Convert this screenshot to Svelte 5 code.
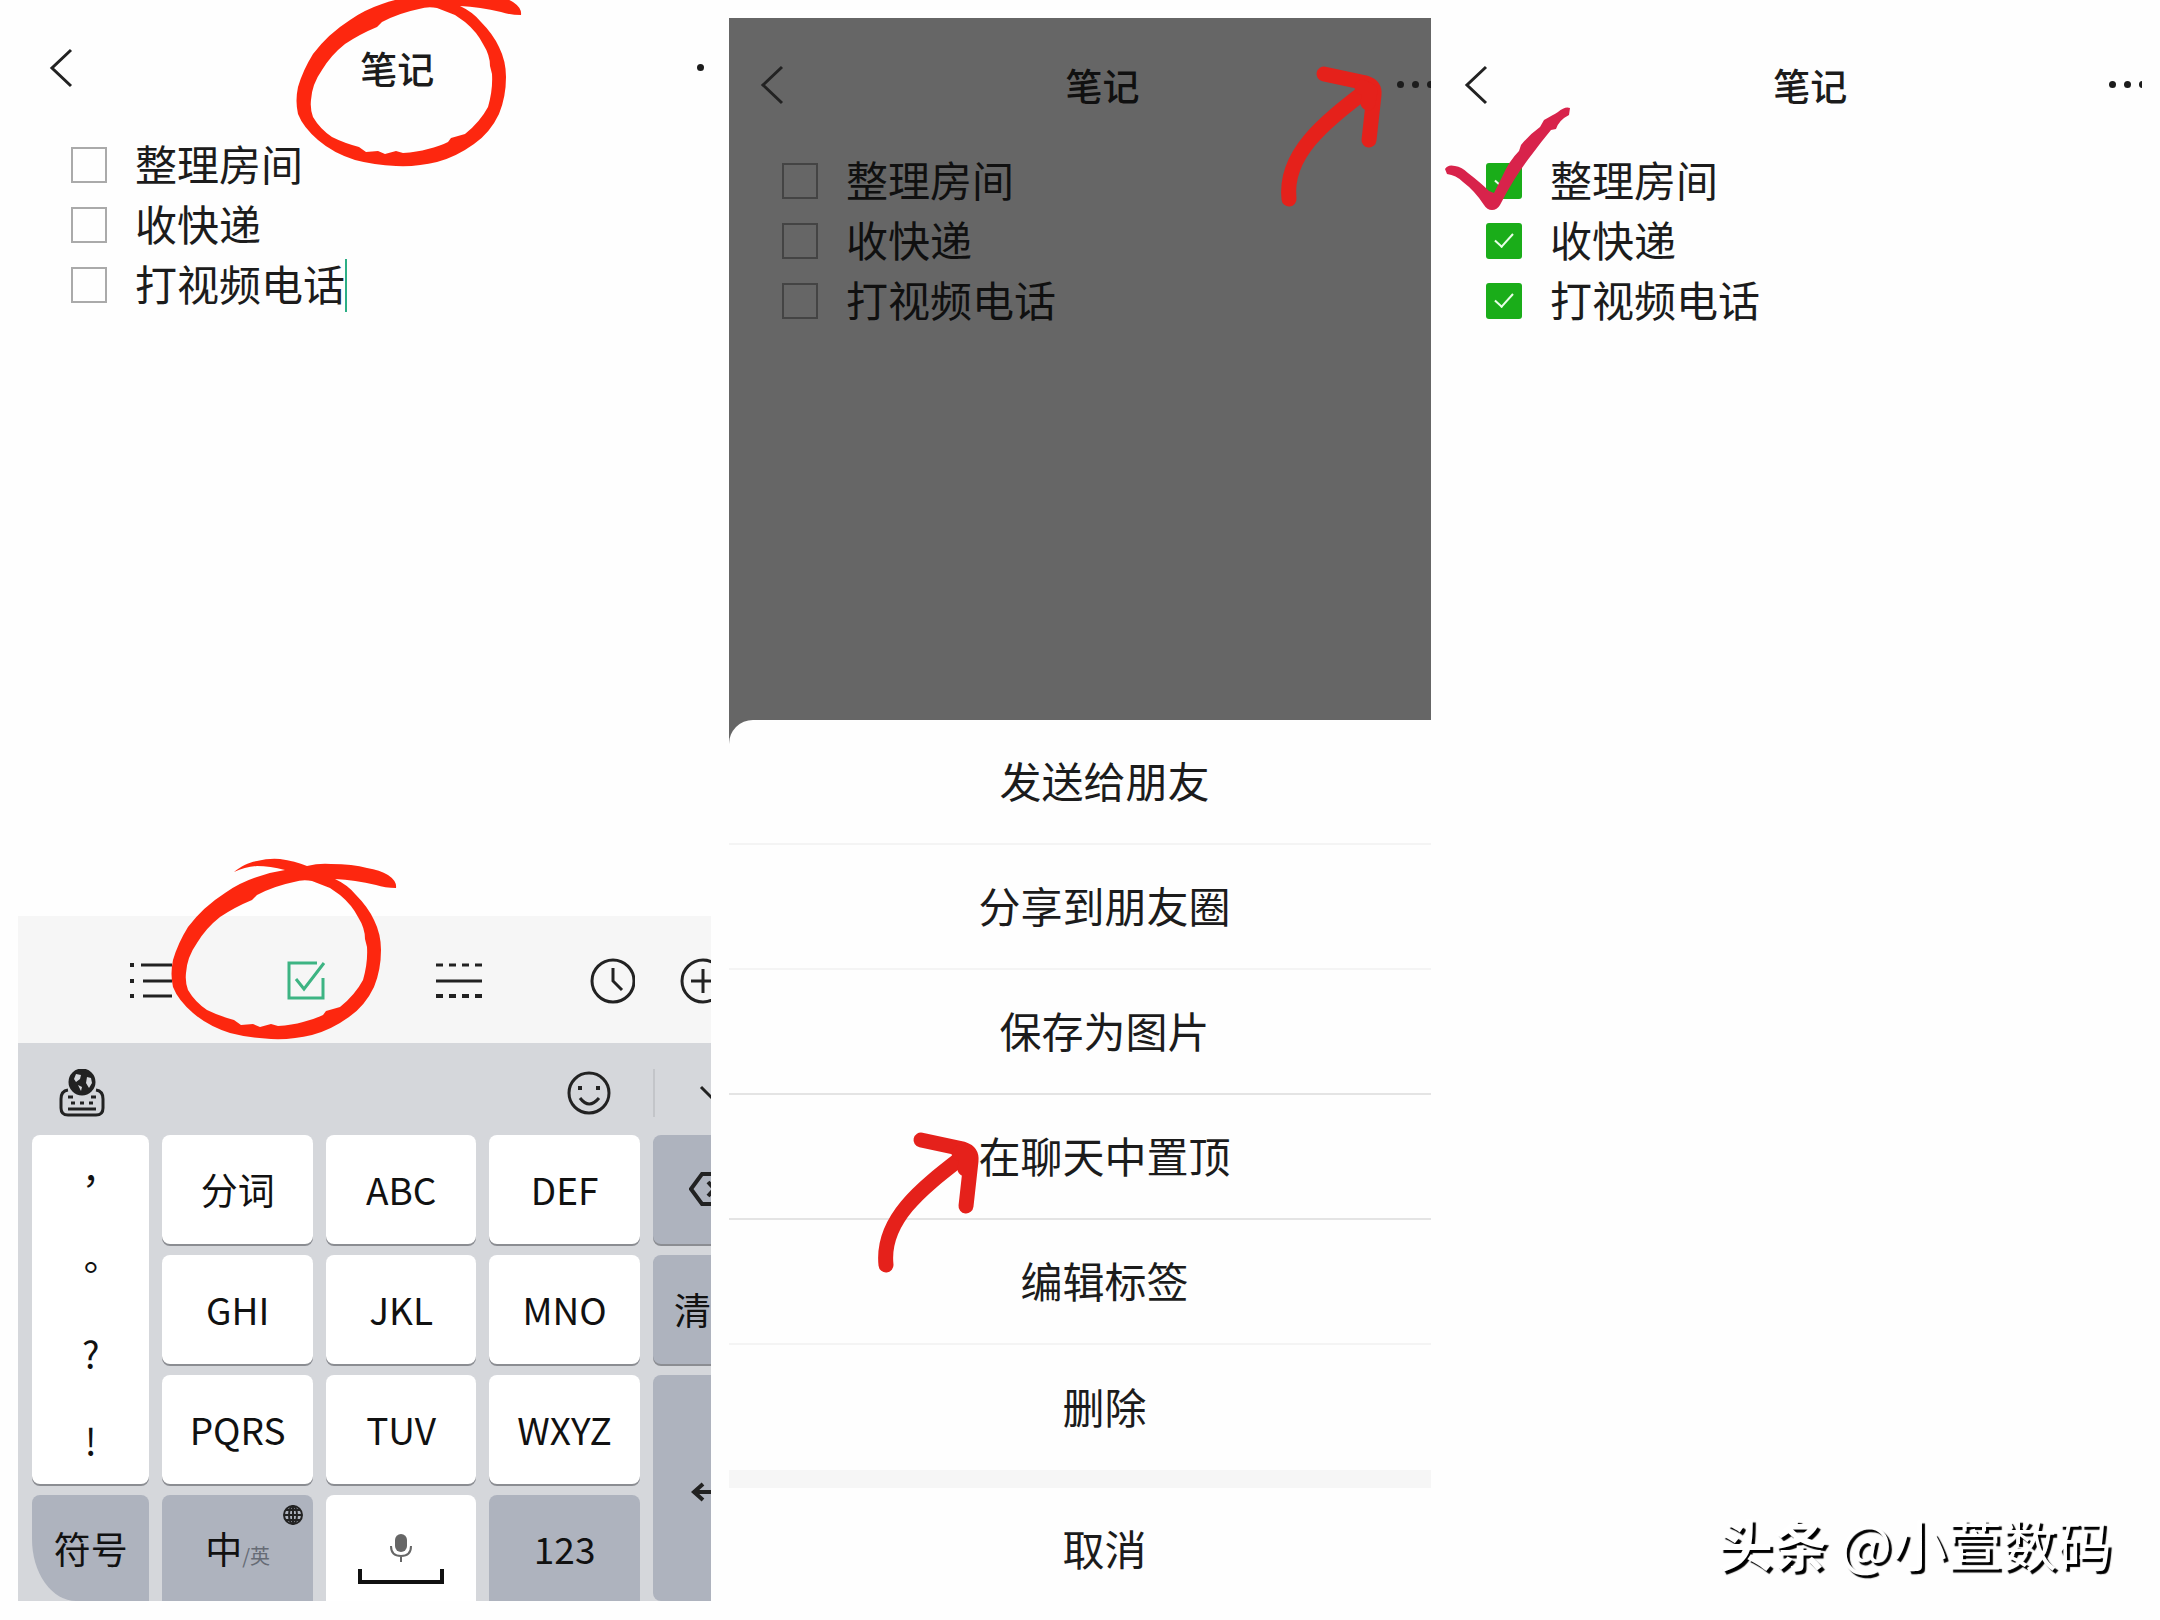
<script lang="ts">
const tasks = ["整理房间", "收快递", "打视频电话"];

const actions = [
  "发送给朋友",
  "分享到朋友圈",
  "保存为图片",
  "在聊天中置顶",
  "编辑标签",
  "删除",
];

const letterKeys = ["分词", "ABC", "DEF", "GHI", "JKL", "MNO", "PQRS", "TUV", "WXYZ"];
const marks = ["，", "。", "?", "!"];

let done = $state<Record<string, boolean[]>>({
  edit: [false, false, false],
  share: [false, false, false],
  finished: [true, true, true],
});
</script>

{#snippet note(name: string, dots: number)}
  <header class="bar">
    <button class="back" aria-label="返回">
      <svg width="24" height="40" viewBox="0 0 24 40"><path d="M22 2 3 20l19 18" /></svg>
    </button>
    <h1>笔记</h1>
    <button class="more" aria-label="更多">
      {#each Array(dots) as _}
        <i></i>
      {/each}
    </button>
  </header>
  <ul class="tasks">
    {#each tasks as task, i (task)}
      <li>
        <label>
          <input type="checkbox" bind:checked={done[name][i]} />
          <span>{task}</span>
        </label>
        {#if name === "edit" && i === tasks.length - 1}
          <span class="caret"></span>
        {/if}
      </li>
    {/each}
  </ul>
{/snippet}

{#snippet circle(place: string)}
  <svg class="mark {place}" width="235" height="188" viewBox="0 0 235 188">
    <path
      fill="#fd270f"
      fill-rule="evenodd"
      d="M69 17C76 11 84 7 92 6Q104 3 115 4Q130 6 142 11Q154 8 166 9Q188 9 202 13Q215 15 223 20Q232 26 231 33Q220 33 211 30Q190 25 170 24Q183 30 191 40Q203 52 209 65Q216 79 216 95Q216 115 209 132Q200 151 184 162Q166 175 147 180Q127 185 106 184Q84 183 65 178Q43 171 28 158Q13 145 8 132Q5 119 8 105Q13 88 23 72Q38 52 60 38Q74 28 92 22Q106 17 120 15Q105 11 92 11Q80 12 69 17ZM147 26Q138 24 129 27Q109 31 92 40L87 45Q70 52 55 62Q41 73 32 88Q22 102 21 118Q20 127 23 135Q30 147 42 155Q54 161 69 165L76 170L88 169L95 172L106 169L113 171Q127 170 138 167Q150 164 158 160L161 156L175 152Q190 140 198 125Q203 108 202 92L200 84Q200 73 193 62Q187 50 175 40L165 33Z"
    />
  </svg>
{/snippet}

{#snippet arrow(place: string)}
  <svg class="mark {place}" width="120" height="150" viewBox="0 0 120 150">
    <g fill="none" stroke="#e5211b" stroke-width="15" stroke-linecap="round" stroke-linejoin="round">
      <path d="M54 14 96 23Q105 26 104 35L99 80" />
      <path d="M98 29C58 60 14 92 19 139" />
      <path d="m92 27 8 4-2 12" />
    </g>
  </svg>
{/snippet}

<main>
  <section class="phone edit">
    <div class="screen">
      {@render note("edit", 1)}

      <div class="toolbar">
        <div class="formats">
          <button aria-label="列表">
            <svg viewBox="0 0 46 46">
              <path d="M11 7h31M13 23h29M13 38h29" />
              <path d="M0 7h4M0 23h4M0 38h4" stroke-width="4" />
            </svg>
          </button>
          <button class="todo" aria-label="待办">
            <svg viewBox="0 0 46 46"><path d="M34 5H6v35h34V20M13 21l8 10L41 5" /></svg>
          </button>
          <button aria-label="分隔线">
            <svg viewBox="0 0 46 46">
              <path d="M0 23h46" />
              <path d="M0 7h7m6 0h7m6 0h7m6 0h7" />
              <path d="M0 38h7m6 0h7m6 0h7m6 0h7" stroke-width="4" />
            </svg>
          </button>
          <button aria-label="时间">
            <svg viewBox="0 0 46 46"><circle cx="24" cy="23" r="21" /><path d="M24 10v13l9 9" /></svg>
          </button>
        </div>
        <button aria-label="添加">
          <svg viewBox="0 0 46 46"><circle cx="23" cy="23" r="21" /><path d="M23 11v24M11 23h24" /></svg>
        </button>
      </div>

      <div class="keyboard">
        <div class="strip">
          <button aria-label="输入法">
            <svg viewBox="0 0 46 48">
              <circle cx="23" cy="13" r="12" fill="#222" />
              <path d="M17 5l5 1-1 4-4 3-2-3ZM28 8l4 1 1 5-3 5-3-5ZM19 16l4 2-1 4Z" fill="#d5d7db" stroke="none" />
              <path d="M9 21Q2 22 2 30v9q0 7 7 7h28q7 0 7-7v-9q0-8-7-9" />
              <path d="M9 28h5M32 28h5M12 34h4M21 34h4M30 34h4" />
              <path d="M9 40h28" />
            </svg>
          </button>
          <button class="smile" aria-label="表情">
            <svg viewBox="0 0 46 48">
              <circle cx="23" cy="24" r="20" />
              <path d="M14 17v4M32 17v4" stroke-width="4" />
              <path d="M14 29q9 12 19 0" />
            </svg>
          </button>
          <button class="fold" aria-label="收起">
            <svg viewBox="0 0 46 48"><path d="m2 18 13 13 13-13" /></svg>
          </button>
        </div>

        <div class="keys">
          <div class="key marks" lang="zh-Hant">
            {#each marks as m (m)}
              <button>{m}</button>
            {/each}
          </div>
          {#each letterKeys as k (k)}
            <button class="key">{k}</button>
          {/each}
          <button class="key dark erase" aria-label="删除">
            <svg width="44" height="34" viewBox="0 0 44 34">
              <path d="M13 2h29v30H13L2 17zM19 10l13 14M32 10 19 24" stroke-width="4" />
            </svg>
          </button>
          <button class="key dark clear">清</button>
          <button class="key dark enter" aria-label="换行">
            <svg width="40" height="22" viewBox="0 0 40 22">
              <path d="M3 11h35V2M12 3l-9 8 9 8" stroke-width="4" />
            </svg>
          </button>
          <button class="key dark last symbol">符号</button>
          <button class="key dark last lang">
            中<small>/英</small>
            <svg class="globe" width="20" height="20" viewBox="0 0 20 20">
              <circle cx="10" cy="10" r="9" /><ellipse cx="10" cy="10" rx="4" ry="9" />
              <path d="M10 1v18M1 10h18M3 5h14M3 15h14" />
            </svg>
          </button>
          <button class="key last space" aria-label="空格">
            <svg width="86" height="52" viewBox="0 0 86 52">
              <rect x="37" y="1" width="12" height="18" rx="6" fill="#666" stroke="none" />
              <path d="M33 13q0 10 10 10t10-10M43 23v6" stroke="#666" stroke-width="2" />
              <path d="M2 36v13h82V36" stroke-width="4" />
            </svg>
          </button>
          <button class="key dark last">123</button>
        </div>
      </div>
    </div>
    {@render circle("on-title")}
    {@render circle("on-todo")}
  </section>

  <section class="phone share">
    <div class="screen dimmed">
      {@render note("share", 3)}
    </div>
    <div class="sheet">
      <div class="screen">
        {#each actions as action (action)}
          <button class="action">{action}</button>
        {/each}
        <button class="action cancel">取消</button>
      </div>
    </div>
    {@render arrow("on-more")}
    {@render arrow("on-pin")}
  </section>

  <section class="phone finished">
    <div class="screen">
      {@render note("finished", 3)}
    </div>
    <svg class="mark tick" width="140" height="115" viewBox="0 0 140 115">
      <path
        fill="#d8234b"
        d="M7 69Q10 64 17 66Q24 67 30 73Q43 83 51 91L56 93L64 77Q71 61 81 51L83 45Q91 35 102 27L106 20Q115 15 120 12Q127 6 132 8L131 15Q121 20 118 29L113 30Q103 42 95 53Q84 67 76 80Q68 93 62 105Q59 110 54 110Q49 110 46 105Q37 91 25 82Q18 75 9 74Z"
      />
    </svg>
  </section>

  <p class="credit"><b>头条</b> @小萱数码</p>
</main>

<style>
  :global(body) {
    margin: 0;
    background: #fefefe;
  }

  main {
    position: relative;
    display: grid;
    grid-template-columns: 693fr 720fr 711fr;
    box-sizing: border-box;
    min-height: 100vh;
    padding: 0 18px 4px;
    font-family: "Noto Sans CJK SC", sans-serif;
    color: #1c1c1c;
  }

  button {
    padding: 0;
    border: none;
    background: none;
    font: inherit;
    color: inherit;
    cursor: pointer;
  }

  svg {
    display: block;
    fill: none;
    stroke: #222;
    stroke-width: 3;
  }

  .phone {
    position: relative;
    display: flex;
    flex-direction: column;
    overflow: hidden;
  }

  .edit {
    margin-bottom: 15px;
  }

  .share {
    margin: 18px 0 0 18px;
    background: #666;
    color: #101010;
  }

  .finished {
    margin: 18px 0 0 2px;
  }

  /* each screen is a little wider than the strip that shows it */
  .screen {
    width: 107%;
  }

  .edit .screen {
    display: flex;
    flex: 1;
    flex-direction: column;
    width: 110%;
  }

  .bar {
    display: grid;
    grid-template-columns: 1fr auto 1fr;
    align-items: center;
    height: 133px;
    padding: 0 35px 0 31px;
  }

  .edit .bar {
    height: 135px;
  }

  .back {
    justify-self: start;
  }

  h1 {
    margin: 0;
    font-size: 37px;
    line-height: 54px;
    font-weight: 500;
  }

  .more {
    display: flex;
    justify-self: end;
    gap: 8px;
    min-width: 48px;
  }

  .more i {
    width: 7px;
    height: 7px;
    border-radius: 50%;
    background: #1c1c1c;
  }

  .tasks {
    margin: 0;
    padding: 0 0 0 53px;
    list-style: none;
  }

  .tasks li,
  .tasks label {
    display: flex;
    align-items: center;
    height: 60px;
    font-size: 42px;
    line-height: 60px;
  }

  .tasks label {
    gap: 28px;
  }

  .tasks label span {
    padding-bottom: 5px;
  }

  .tasks input {
    display: grid;
    place-items: center;
    appearance: none;
    box-sizing: border-box;
    width: 36px;
    height: 36px;
    margin: 0;
    border: 2px solid #aaa;
  }

  .dimmed input {
    border-color: #444;
  }

  .tasks input:checked {
    border: none;
    border-radius: 3px;
    background: #1aad19;
  }

  .tasks input:checked::after {
    content: "";
    width: 8px;
    height: 16px;
    margin-bottom: 6px;
    border: solid #e8ffe8;
    border-width: 0 2px 2px 0;
    transform: rotate(42deg);
  }

  .caret {
    width: 2px;
    height: 53px;
    background: #2bae85;
  }

  .toolbar {
    display: flex;
    align-items: center;
    gap: 45px;
    box-sizing: border-box;
    height: 127px;
    margin-top: auto;
    padding: 2px 0 0 112px;
    background: #f6f6f6;
  }

  .formats {
    display: flex;
    gap: 107px;
  }

  .toolbar svg {
    width: 46px;
    height: 46px;
  }

  .todo svg {
    stroke: #3db483;
  }

  .keyboard {
    background: #d5d7db;
  }

  .strip {
    display: flex;
    align-items: center;
    height: 92px;
    padding: 8px 0 0 41px;
    box-sizing: border-box;
  }

  .strip svg {
    width: 46px;
    height: 48px;
  }

  .smile {
    margin-left: 461px;
  }

  .fold {
    margin-left: 41px;
    padding-left: 44px;
    border-left: 2px solid #c3c5c9;
  }

  .keys {
    display: grid;
    grid-template-columns: 117fr 150fr 150fr 150fr 117fr;
    grid-template-rows: 109px 109px 109px 106px;
    gap: 11px 13px;
    padding: 0 10px 0 14px;
  }

  .key {
    grid-row-end: span 1;
    padding-bottom: 2px;
    border-radius: 8px;
    background: #fff;
    box-shadow: 0 2px 0 #8b8d92;
    font-size: 37px;
    line-height: 54px;
    color: #111;
  }

  .marks {
    display: flex;
    flex-direction: column;
    grid-area: 1 / 1 / 4 / 2;
    padding: 0;
    font-family: "Noto Sans CJK TC", sans-serif;
  }

  .marks button {
    flex: 1;
  }

  .dark {
    background: #aeb3be;
  }

  .erase {
    grid-area: 1 / 5;
    padding-left: 36px;
  }

  .clear {
    grid-area: 2 / 5;
    padding-left: 21px;
    text-align: left;
  }

  .enter {
    grid-area: 3 / 5 / 5 / 6;
    padding: 8px 0 0 38px;
    box-shadow: none;
  }

  .last {
    padding: 0;
    border-radius: 8px 8px 0 0;
    box-shadow: none;
  }

  .symbol {
    border-bottom-left-radius: 44px 62px;
  }

  .lang {
    position: relative;
  }

  .lang small {
    font-size: 20px;
    line-height: 20px;
    color: #666b75;
  }

  .globe {
    position: absolute;
    top: 10px;
    right: 10px;
    stroke-width: 2;
  }

  .space svg {
    margin: 22px auto 0;
    stroke: #111;
  }

  .sheet {
    margin-top: auto;
    overflow: hidden;
    border-top-left-radius: 24px;
    background: #fefefe;
  }

  .action {
    display: block;
    box-sizing: border-box;
    width: 100%;
    height: 125px;
    padding-bottom: 4px;
    border-bottom: 2px solid #f4f4f4;
    font-size: 42px;
    line-height: 60px;
    color: #1c1c1c;
  }

  .action:nth-child(3),
  .action:nth-child(4) {
    border-color: #e4e4e4;
  }

  .action:nth-child(6) {
    border: none;
  }

  .cancel {
    height: 146px;
    padding-bottom: 8px;
    border-top: 18px solid #f6f6f6;
    border-bottom: none;
  }

  .mark {
    position: absolute;
    stroke: none;
    pointer-events: none;
  }

  .on-title {
    top: -18px;
    left: 272px;
  }

  .on-todo {
    bottom: 558px;
    left: 147px;
  }

  .on-more {
    top: 42px;
    left: 541px;
  }

  .on-pin {
    bottom: 340px;
    left: 138px;
  }

  .tick {
    top: 82px;
    left: 5px;
  }

  .credit {
    position: absolute;
    right: 48px;
    bottom: 38px;
    margin: 0;
    font-size: 55px;
    line-height: 80px;
    color: #fff;
    text-shadow: 3px 3px 1px #000;
  }
</style>
